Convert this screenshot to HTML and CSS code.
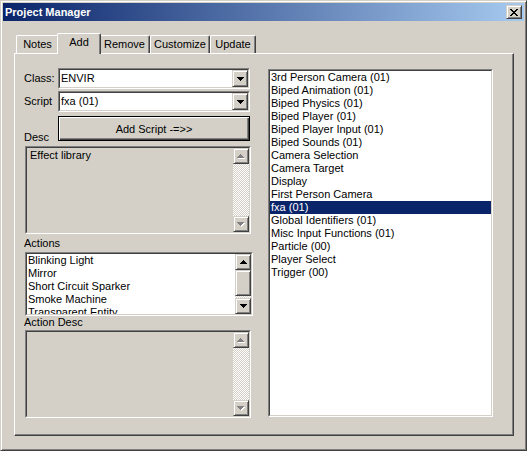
FILE: index.html
```html
<!DOCTYPE html>
<html lang="en">

<head>
    <meta charset="UTF-8">
    <meta name="viewport" content="width=device-width, initial-scale=1.0">
    <title>Project Manager</title>
    <link rel="stylesheet" href="styles.css">
</head>

<body>
    <div class="window">
        <div class="titlebar">
            <span class="title">Project Manager</span>
            <div class="close-btn raised">
                <svg width="8" height="7" viewBox="0 0 8 7" shape-rendering="crispEdges">
                    <path d="M0 0h2v1H0zM6 0h2v1H6zM1 1h2v1H1zM5 1h2v1H5zM2 2h4v1H2zM3 3h2v1H3zM2 4h4v1H2zM1 5h2v1H1zM5 5h2v1H5zM0 6h2v1H0zM6 6h2v1H6z"/>
                </svg>
            </div>
        </div>

        <div class="client">
            <div class="tabs">
                <div class="tab tab-notes">Notes</div>
                <div class="tab tab-add active">Add</div>
                <div class="tab tab-remove">Remove</div>
                <div class="tab tab-customize">Customize</div>
                <div class="tab tab-update">Update</div>
            </div>

            <div class="panel">
                <div class="left-col">
                    <div class="field-row">
                        <span class="field-label">Class:</span>
                        <div class="sunken combo">
                            <div class="sunken-inner">
                                <span class="combo-text">ENVIR</span>
                                <div class="combo-btn raised">
                                    <svg width="7" height="4" viewBox="0 0 7 4" shape-rendering="crispEdges"><path d="M0 0h7v1H0zM1 1h5v1H1zM2 2h3v1H2zM3 3h1v1H3z"/></svg>
                                </div>
                            </div>
                        </div>
                    </div>
                    <div class="field-row script-row">
                        <span class="field-label">Script</span>
                        <div class="sunken combo">
                            <div class="sunken-inner">
                                <span class="combo-text">fxa (01)</span>
                                <div class="combo-btn raised">
                                    <svg width="7" height="4" viewBox="0 0 7 4" shape-rendering="crispEdges"><path d="M0 0h7v1H0zM1 1h5v1H1zM2 2h3v1H2zM3 3h1v1H3z"/></svg>
                                </div>
                            </div>
                        </div>
                    </div>
                    <div class="button-row">
                        <span class="field-label desc-label">Desc</span>
                        <button class="default-btn">Add Script -=&gt;&gt;</button>
                    </div>

                    <div class="sunken text-box desc-box">
                        <div class="sunken-inner readonly">
                            <div class="edit-text">Effect library</div>
                            <div class="vscroll">
                                <div class="scroll-btn raised">
                                    <svg width="8" height="5" viewBox="0 0 8 5" shape-rendering="crispEdges"><path fill="#fff" transform="translate(1 1)" d="M3 0h1v1H3zM2 1h3v1H2zM1 2h5v1H1zM0 3h7v1H0z"/><path fill="#808080" d="M3 0h1v1H3zM2 1h3v1H2zM1 2h5v1H1zM0 3h7v1H0z"/></svg>
                                </div>
                                <div class="scroll-track"></div>
                                <div class="scroll-btn raised">
                                    <svg width="8" height="5" viewBox="0 0 8 5" shape-rendering="crispEdges"><path fill="#fff" transform="translate(1 1)" d="M0 0h7v1H0zM1 1h5v1H1zM2 2h3v1H2zM3 3h1v1H3z"/><path fill="#808080" d="M0 0h7v1H0zM1 1h5v1H1zM2 2h3v1H2zM3 3h1v1H3z"/></svg>
                                </div>
                            </div>
                        </div>
                    </div>

                    <div class="group-label actions-label">Actions</div>
                    <div class="sunken actions-list">
                        <div class="sunken-inner">
                            <div class="list-items">
                                <div class="list-item">Blinking Light</div>
                                <div class="list-item">Mirror</div>
                                <div class="list-item">Short Circuit Sparker</div>
                                <div class="list-item">Smoke Machine</div>
                                <div class="list-item">Transparent Entity</div>
                            </div>
                            <div class="vscroll">
                                <div class="scroll-btn raised">
                                    <svg width="7" height="4" viewBox="0 0 7 4" shape-rendering="crispEdges"><path d="M3 0h1v1H3zM2 1h3v1H2zM1 2h5v1H1zM0 3h7v1H0z"/></svg>
                                </div>
                                <div class="scroll-thumb raised"></div>
                                <div class="scroll-track"></div>
                                <div class="scroll-btn raised">
                                    <svg width="7" height="4" viewBox="0 0 7 4" shape-rendering="crispEdges"><path d="M0 0h7v1H0zM1 1h5v1H1zM2 2h3v1H2zM3 3h1v1H3z"/></svg>
                                </div>
                            </div>
                        </div>
                    </div>

                    <div class="group-label">Action Desc</div>
                    <div class="sunken text-box action-desc-box">
                        <div class="sunken-inner readonly">
                            <div class="edit-text"></div>
                            <div class="vscroll">
                                <div class="scroll-btn raised">
                                    <svg width="8" height="5" viewBox="0 0 8 5" shape-rendering="crispEdges"><path fill="#fff" transform="translate(1 1)" d="M3 0h1v1H3zM2 1h3v1H2zM1 2h5v1H1zM0 3h7v1H0z"/><path fill="#808080" d="M3 0h1v1H3zM2 1h3v1H2zM1 2h5v1H1zM0 3h7v1H0z"/></svg>
                                </div>
                                <div class="scroll-track"></div>
                                <div class="scroll-btn raised">
                                    <svg width="8" height="5" viewBox="0 0 8 5" shape-rendering="crispEdges"><path fill="#fff" transform="translate(1 1)" d="M0 0h7v1H0zM1 1h5v1H1zM2 2h3v1H2zM3 3h1v1H3z"/><path fill="#808080" d="M0 0h7v1H0zM1 1h5v1H1zM2 2h3v1H2zM3 3h1v1H3z"/></svg>
                                </div>
                            </div>
                        </div>
                    </div>
                </div>

                <div class="sunken script-list">
                    <div class="sunken-inner">
                        <div class="list-items">
                            <div class="list-item">3rd Person Camera (01)</div>
                            <div class="list-item">Biped Animation (01)</div>
                            <div class="list-item">Biped Physics (01)</div>
                            <div class="list-item">Biped Player (01)</div>
                            <div class="list-item">Biped Player Input (01)</div>
                            <div class="list-item">Biped Sounds (01)</div>
                            <div class="list-item">Camera Selection</div>
                            <div class="list-item">Camera Target</div>
                            <div class="list-item">Display</div>
                            <div class="list-item">First Person Camera</div>
                            <div class="list-item selected">fxa (01)</div>
                            <div class="list-item">Global Identifiers (01)</div>
                            <div class="list-item">Misc Input Functions (01)</div>
                            <div class="list-item">Particle (00)</div>
                            <div class="list-item">Player Select</div>
                            <div class="list-item">Trigger (00)</div>
                        </div>
                    </div>
                </div>
            </div>
        </div>
    </div>
</body>

</html>
```

FILE: styles.css
```css
* {
    box-sizing: border-box;
}

body {
    margin: 0;
    font-family: "Liberation Sans", Arial, sans-serif;
    font-size: 11px;
    color: #000;
    background-color: #d4d0c8;
}

.window {
    width: 527px;
    height: 451px;
    border: 1px solid;
    border-color: #d4d0c8 #404040 #404040 #d4d0c8;
    box-shadow: inset 1px 1px #fff, inset -1px -1px #808080;
    padding: 2px;
    background-color: #d4d0c8;
    display: flex;
    flex-direction: column;
}

.raised {
    border: 1px solid;
    border-color: #d4d0c8 #404040 #404040 #d4d0c8;
    box-shadow: inset 1px 1px #fff, inset -1px -1px #808080;
    background-color: #d4d0c8;
}

/* title bar */
.titlebar {
    height: 18px;
    background: linear-gradient(to right, #0a246a, #a6caf0);
    display: flex;
    align-items: center;
    justify-content: space-between;
    padding: 0 2px;
}

.titlebar .title {
    color: #fff;
    font-weight: bold;
}

.close-btn {
    width: 16px;
    height: 14px;
    display: flex;
    align-items: center;
    justify-content: center;
}

/* tabs */
.client {
    flex: 1;
    padding: 12px 10px 0 11px;
}

.tabs {
    display: flex;
    align-items: flex-end;
    height: 21px;
    margin-bottom: -1px;
    padding-left: 2px;
    position: relative;
    z-index: 1;
}

.tab {
    height: 18px;
    margin-bottom: 1px;
    border-top: 1px solid #fff;
    border-left: 1px solid #fff;
    border-right: 1px solid #404040;
    border-radius: 2px 2px 0 0;
    box-shadow: inset -1px 0 #808080;
    text-align: center;
    line-height: 17px;
    background-color: #d4d0c8;
}

.tab.active {
    height: 21px;
    margin: 0 -2px;
    padding-bottom: 3px;
    position: relative;
    z-index: 1;
}

.tab-notes { width: 43px; }
.tab-add { width: 44px; }
.tab-remove { width: 51px; }
.tab-customize { width: 60px; }
.tab-update { width: 46px; }

.panel {
    height: 383px;
    border: 1px solid;
    border-color: #fff #404040 #404040 #fff;
    box-shadow: inset -1px -1px #808080;
    display: flex;
    gap: 16px;
    padding: 14px 0 0 9px;
}

/* left column */
.left-col {
    width: 228px;
    display: flex;
    flex-direction: column;
}

.field-row {
    display: flex;
    align-items: center;
    height: 21px;
}

.script-row {
    margin-top: 2px;
}

.field-label {
    width: 34px;
    line-height: 13px;
}

.sunken {
    border: 1px solid;
    border-color: #808080 #fff #fff #808080;
}

.sunken-inner {
    height: 100%;
    border: 1px solid;
    border-color: #404040 #d4d0c8 #d4d0c8 #404040;
    background-color: #fff;
    display: flex;
}

.sunken-inner.readonly {
    background-color: #d4d0c8;
}

.combo {
    width: 192px;
    height: 21px;
}

.combo-text {
    flex: 1;
    line-height: 17px;
    padding-left: 1px;
}

.combo-btn {
    width: 16px;
    display: flex;
    align-items: center;
    justify-content: center;
}

.button-row {
    display: flex;
    align-items: flex-end;
    margin-top: 4px;
}

.desc-label {
    margin-bottom: -3px;
}

.default-btn {
    width: 192px;
    height: 25px;
    padding: 0;
    font-family: inherit;
    font-size: 11px;
    color: #000;
    background-color: #d4d0c8;
    border: 1px solid #000;
    box-shadow: inset 1px 1px #fff, inset -1px -1px #404040, inset -2px -2px #808080;
}

.text-box {
    width: 226px;
    height: 88px;
    margin-left: 1px;
}

.desc-box {
    margin-top: 5px;
}

.edit-text {
    flex: 1;
    padding: 1px 3px;
    line-height: 13px;
}

.group-label {
    line-height: 13px;
}

.actions-label {
    margin-top: 3px;
}

.actions-list {
    width: 228px;
    height: 64px;
    margin-top: 2px;
    margin-left: 1px;
}

.action-desc-box {
    margin-top: 1px;
}

/* scrollbars */
.vscroll {
    width: 16px;
    display: flex;
    flex-direction: column;
}

.scroll-btn {
    height: 16px;
    display: flex;
    align-items: center;
    justify-content: center;
}

.scroll-thumb {
    height: 26px;
}

.scroll-track {
    flex: 1;
    background-image: repeating-conic-gradient(#fff 0 25%, #d4d0c8 0 50%);
    background-size: 2px 2px;
}

/* lists */
.list-items {
    flex: 1;
    overflow: hidden;
}

.list-item {
    line-height: 13px;
    padding-left: 1px;
    white-space: nowrap;
}

.list-item.selected {
    background-color: #0a246a;
    color: #fff;
}

.script-list {
    width: 225px;
    height: 348px;
    margin-top: 1px;
}
```
